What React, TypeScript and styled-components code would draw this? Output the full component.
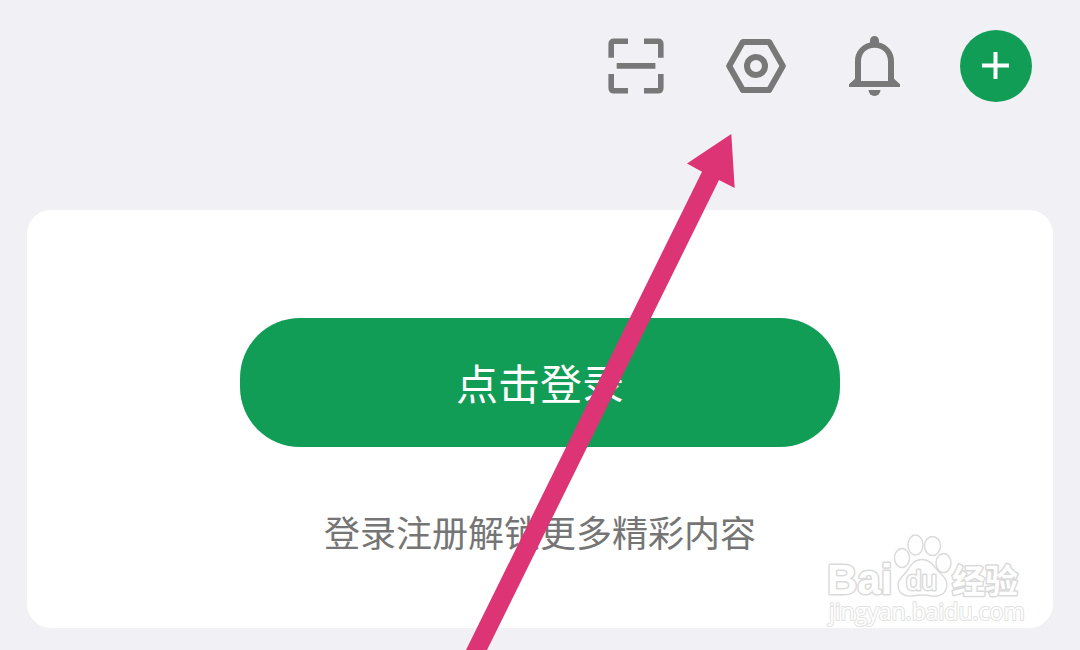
import React from "react";
import styled, { createGlobalStyle } from "styled-components";

const GlobalStyle = createGlobalStyle`
  * { box-sizing: border-box; }
  body {
    margin: 0;
    background: #f0f0f5;
    font-family: "Noto Sans CJK SC", "Noto Sans", sans-serif;
  }
`;

const Page = styled.div`
  position: relative;
  min-height: 100vh;
  overflow: hidden;
  background: #f0f0f5;
`;

const Toolbar = styled.header`
  display: flex;
  justify-content: flex-end;
  gap: 48px;
  padding: 30px 48px 0;
`;

const IconButton = styled.button<{ $filled?: boolean }>`
  display: block;
  width: 72px;
  height: 72px;
  padding: 0;
  border: 0;
  border-radius: 50%;
  background: ${(p) => (p.$filled ? "#129d57" : "transparent")};
  color: ${(p) => (p.$filled ? "#ffffff" : "#787878")};
  cursor: pointer;

  svg {
    display: block;
  }
`;

const Card = styled.main`
  position: relative;
  display: flex;
  flex-direction: column;
  align-items: center;
  gap: 57px;
  margin: 108px 27px 0;
  padding: 108px 24px 70px;
  border-radius: 24px;
  background: #ffffff;
`;

const LoginButton = styled.button`
  width: 100%;
  max-width: 600px;
  padding: 34px 24px 35px;
  border: 0;
  border-radius: 60px;
  background: #129d57;
  color: #ffffff;
  font-family: inherit;
  font-size: 42px;
  line-height: 60px;
  cursor: pointer;
`;

const Hint = styled.p`
  margin: 0;
  color: #757575;
  font-size: 36px;
  line-height: 54px;
  text-align: center;
`;

const Watermark = styled.svg`
  position: absolute;
  right: 23px;
  bottom: 0;
  pointer-events: none;

  text {
    paint-order: stroke;
    stroke-linejoin: round;
  }
`;

const Pointer = styled.svg`
  position: absolute;
  top: 134px;
  right: 345px;
  pointer-events: none;
`;

const ScanIcon = () => (
  <svg width="72" height="72" viewBox="0 0 72 72" fill="none" stroke="currentColor" strokeWidth="5.6" aria-hidden="true">
    <path d="M11.2 27.8V14Q11.2 11.2 14 11.2H28M44 11.2H58Q60.8 11.2 60.8 14V27.8M60.8 44V58Q60.8 60.8 58 60.8H44M28 60.8H14Q11.2 60.8 11.2 58V44M16.7 35.9H55.4" />
  </svg>
);

const SettingsIcon = () => (
  <svg width="72" height="72" viewBox="0 0 72 72" fill="none" stroke="currentColor" strokeWidth="6" strokeLinejoin="round" aria-hidden="true">
    <path d="M9.2 36L22.8 12H49.2L62.8 36L49.2 60H22.8Z" />
    <circle cx="36" cy="36" r="9" />
  </svg>
);

const BellIcon = () => (
  <svg width="72" height="72" viewBox="0 0 72 72" fill="currentColor" aria-hidden="true">
    <path
      fillRule="evenodd"
      d="M30 12.6V10.5A4.5 4.5 0 0 1 39 10.5V12.6C48 14.8 54 22 54 31V48.7L60 54.3V57H9V54.3L15 48.7V31C15 22 21 14.8 30 12.6ZM21 51H48V31.5C48 23.5 42.5 17.8 34.5 17.8S21 23.5 21 31.5Z"
    />
    <path d="M28.5 60H40.5A6 6 0 0 1 28.5 60Z" />
  </svg>
);

const PlusIcon = () => (
  <svg width="72" height="72" viewBox="0 0 72 72" fill="none" stroke="currentColor" strokeWidth="4" aria-hidden="true">
    <path d="M35.5 22V49M22 35.5H49" />
  </svg>
);

const BaiduWatermark = () => (
  <Watermark width="210" height="100" viewBox="0 0 210 100" fill="#ffffff" stroke="#dadada" strokeWidth="1.4">
    <g fontFamily='"Liberation Sans", sans-serif'>
      <text x="7" y="66" fontSize="42" fontWeight="700" strokeWidth="3">Bai</text>
      <ellipse cx="82" cy="30" rx="7.5" ry="9.5" />
      <ellipse cx="95.5" cy="17" rx="7.5" ry="10" />
      <ellipse cx="112.5" cy="18" rx="8" ry="9.5" />
      <ellipse cx="123.5" cy="35" rx="7.5" ry="9.5" />
      <path d="M102 31.5C110 31.5 114 38 118 43C123 48 127 51 127 57C126 66 120 69 112 68C105 66.5 99 66.5 92 68C84 69 78 65 78 57C78 51 83 48 87 43C91 37 94 31.5 102 31.5Z" />
      <text x="86" y="62" fontSize="28" fontWeight="400" strokeWidth="3">du</text>
    </g>
    <text x="132" y="65" fontSize="33" fontWeight="700" fontFamily='"Noto Sans CJK SC", sans-serif' strokeWidth="3">经验</text>
    <text x="9" y="92" fontSize="23" fontFamily='"Open Sans", sans-serif' stroke="#e2e2e2" strokeWidth="2">jingyan.baidu.com</text>
  </Watermark>
);

export default function App() {
  return (
    <Page>
      <GlobalStyle />
      <Toolbar>
        <IconButton type="button" aria-label="扫一扫"><ScanIcon /></IconButton>
        <IconButton type="button" aria-label="设置"><SettingsIcon /></IconButton>
        <IconButton type="button" aria-label="通知"><BellIcon /></IconButton>
        <IconButton type="button" aria-label="添加" $filled><PlusIcon /></IconButton>
      </Toolbar>
      <Card>
        <LoginButton type="button">点击登录</LoginButton>
        <Hint>登录注册解锁更多精彩内容</Hint>
        <BaiduWatermark />
      </Card>
      <Pointer width="270" height="516" viewBox="0 0 270 516" fill="#dc3475" aria-hidden="true">
        <path d="M266.3 0L269.7 54L254 46L22 516H1L237 37.7L222 29.5Z" />
      </Pointer>
    </Page>
  );
}
